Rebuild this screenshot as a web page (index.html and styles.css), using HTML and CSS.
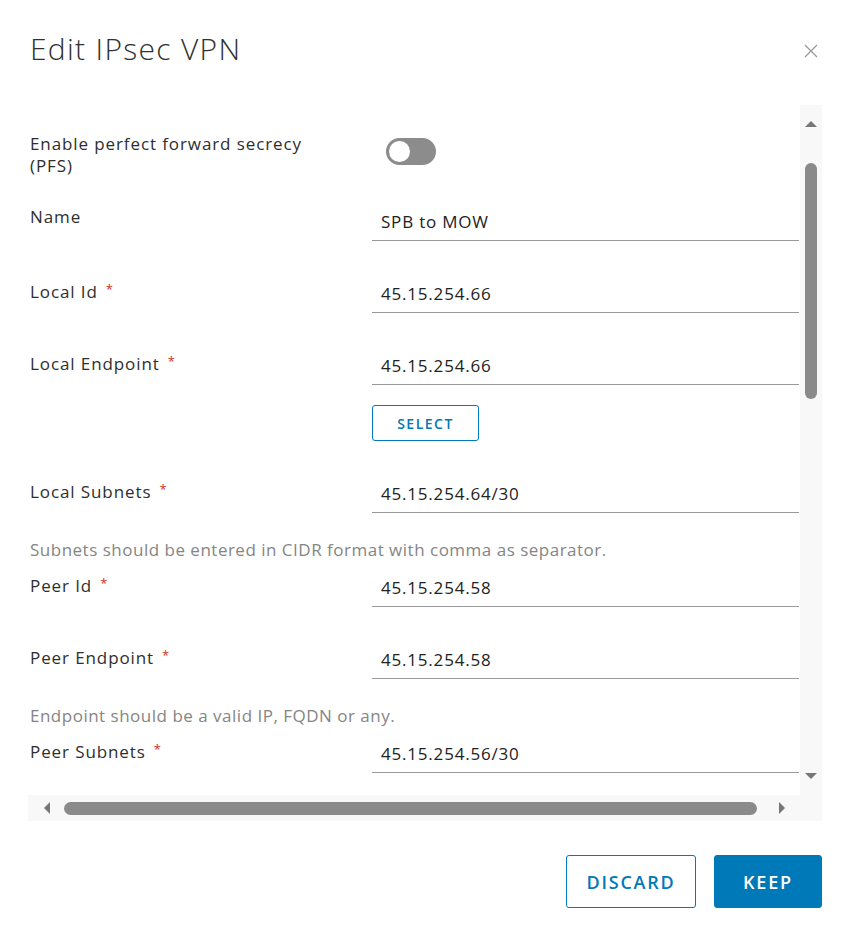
FILE: index.html
```html
<!DOCTYPE html>
<html lang="en">
<head>
<meta charset="utf-8">
<title>Edit IPsec VPN</title>
<link rel="stylesheet" href="styles.css">
</head>
<body>
<div class="modal">
  <header class="modal-header">
    <h1 class="modal-title">Edit IPsec VPN</h1>
    <button class="close" aria-label="Close">
      <svg width="14" height="14" viewBox="0 0 14 14"><path d="M1 1 L13 13 M13 1 L1 13" stroke="#9a9a9a" stroke-width="1.3" fill="none"/></svg>
    </button>
  </header>

  <div class="scroll-frame">
    <div class="viewport">
      <div class="form">
        <div class="row row-toggle">
          <div class="label label-wrap">Enable perfect forward secrecy (PFS)</div>
          <div class="control"><span class="toggle"><span class="knob"></span></span></div>
        </div>

        <div class="row field first">
          <div class="label">Name</div>
          <div class="control"><div class="input">SPB to MOW</div></div>
        </div>

        <div class="row field">
          <div class="label">Local Id<span class="req">*</span></div>
          <div class="control"><div class="input">45.15.254.66</div></div>
        </div>

        <div class="row field">
          <div class="label">Local Endpoint<span class="req">*</span></div>
          <div class="control">
            <div class="input">45.15.254.66</div>
            <button class="btn-select">SELECT</button>
          </div>
        </div>

        <div class="row field">
          <div class="label">Local Subnets<span class="req">*</span></div>
          <div class="control"><div class="input">45.15.254.64/30</div></div>
        </div>
        <div class="help">Subnets should be entered in CIDR format with comma as separator.</div>

        <div class="row field">
          <div class="label">Peer Id<span class="req">*</span></div>
          <div class="control"><div class="input">45.15.254.58</div></div>
        </div>

        <div class="row field">
          <div class="label">Peer Endpoint<span class="req">*</span></div>
          <div class="control"><div class="input">45.15.254.58</div></div>
        </div>
        <div class="help">Endpoint should be a valid IP, FQDN or any.</div>

        <div class="row field">
          <div class="label">Peer Subnets<span class="req">*</span></div>
          <div class="control"><div class="input">45.15.254.56/30</div></div>
        </div>
      </div>
    </div>

    <div class="vbar">
      <span class="arrow arrow-up"></span>
      <span class="vthumb"></span>
      <span class="arrow arrow-down"></span>
    </div>

    <div class="hbar">
      <span class="arrow arrow-left"></span>
      <span class="hthumb"></span>
      <span class="arrow arrow-right"></span>
    </div>
    <div class="corner"></div>
  </div>

  <footer class="modal-footer">
    <button class="btn btn-outline">DISCARD</button>
    <button class="btn btn-primary">KEEP</button>
  </footer>
</div>
</body>
</html>
```

FILE: styles.css
```css
* { box-sizing: border-box; }

html, body {
  margin: 0;
  padding: 0;
  background: #ffffff;
}

body {
  font-family: "Open Sans", "Noto Sans", sans-serif;
  color: #313131;
}

.modal {
  width: 852px;
  height: 930px;
  background: #fff;
}

.modal-header {
  display: flex;
  justify-content: space-between;
  align-items: flex-start;
  padding: 31px 30px 0 30px;
  height: 105px;
}

.modal-title {
  margin: 0;
  font-size: 30px;
  line-height: 36px;
  font-weight: 300;
  color: #313131;
  letter-spacing: 1.3px;
}

.close {
  margin: 13px 4px 0 0;
  padding: 0;
  border: 0;
  background: none;
  width: 14px;
  height: 14px;
  display: block;
}
.close svg { display: block; }

/* scroll area */
.scroll-frame {
  margin-left: 28px;
  width: 794px;
  display: grid;
  grid-template-columns: 772px 22px;
  grid-template-rows: 690px 26px;
}

.viewport {
  overflow: hidden;
  background: #fff;
}

.form {
  padding: 28px 0 0 2px;
}

.row {
  display: grid;
  grid-template-columns: 342px 427px;
}

.label {
  font-size: 17px;
  line-height: 22px;
  letter-spacing: 0.9px;
  color: #2e2e2e;
  padding-top: 2px;
}

.label-wrap {
  max-width: 290px;
  padding-top: 0;
}

.req {
  color: #d0311c;
  font-size: 13px;
  margin-left: 8px;
  vertical-align: 4px;
}

.row-toggle .control {
  padding-left: 14px;
  padding-top: 5px;
}

.toggle {
  display: block;
  width: 50px;
  height: 27px;
  border-radius: 14px;
  background: #8c8c8c;
  border: 2px solid #8c8c8c;
  position: relative;
}
.knob {
  position: absolute;
  left: 1px;
  top: 1px;
  width: 21px;
  height: 21px;
  border-radius: 50%;
  background: #fff;
}

.field { margin-top: 35px; }
.field.first { margin-top: 27px; }

.input {
  height: 37px;
  border-bottom: 1px solid #9a9a9a;
  padding: 0 9px;
  font-size: 17px;
  line-height: 36px;
  letter-spacing: 0.8px;
  color: #222;
}

.btn-select {
  display: block;
  margin-top: 20px;
  width: 107px;
  height: 36px;
  border: 1px solid #0079b8;
  border-radius: 3px;
  background: #fff;
  color: #0079b8;
  font-family: "Open Sans", "Noto Sans", sans-serif;
  font-size: 14px;
  font-weight: 600;
  letter-spacing: 1.5px;
  padding: 0;
}

.help {
  margin-top: 26px;
  font-size: 17px;
  line-height: 22px;
  letter-spacing: 0.5px;
  color: #858585;
}
.help + .field { margin-top: 9px; }

/* vertical scrollbar */
.vbar {
  background: #f8f8f8;
  display: flex;
  flex-direction: column;
  align-items: center;
}
.vthumb {
  display: block;
  width: 12px;
  height: 236px;
  border-radius: 6px;
  background: #8a8a8a;
  margin-top: 36px;
}
.arrow {
  display: block;
  width: 0;
  height: 0;
}
.arrow-up {
  margin-top: 16px;
  border-left: 6px solid transparent;
  border-right: 6px solid transparent;
  border-bottom: 6px solid #777;
}
.arrow-down {
  margin-top: auto;
  margin-bottom: 16px;
  border-left: 6px solid transparent;
  border-right: 6px solid transparent;
  border-top: 6px solid #777;
}

/* horizontal scrollbar */
.hbar {
  background: #f8f8f8;
  display: flex;
  align-items: center;
  padding-left: 16px;
}
.arrow-left {
  border-top: 6px solid transparent;
  border-bottom: 6px solid transparent;
  border-right: 6px solid #777;
}
.hthumb {
  display: block;
  width: 693px;
  height: 13px;
  border-radius: 7px;
  background: #8a8a8a;
  margin-left: 14px;
}
.arrow-right {
  margin-left: 22px;
  border-top: 6px solid transparent;
  border-bottom: 6px solid transparent;
  border-left: 6px solid #777;
}
.corner { background: #f8f8f8; }

/* footer */
.modal-footer {
  display: flex;
  justify-content: flex-end;
  gap: 18px;
  padding-right: 30px;
  margin-top: 34px;
}

.btn {
  height: 53px;
  border-radius: 3px;
  font-family: "Open Sans", "Noto Sans", sans-serif;
  font-size: 18px;
  font-weight: 600;
  letter-spacing: 1.8px;
  padding: 0;
}
.btn-outline {
  width: 130px;
  background: #fff;
  border: 1px solid #0079b8;
  color: #0079b8;
}
.btn-primary {
  width: 108px;
  background: #0079b8;
  border: 1px solid #0079b8;
  color: #fff;
}
```
